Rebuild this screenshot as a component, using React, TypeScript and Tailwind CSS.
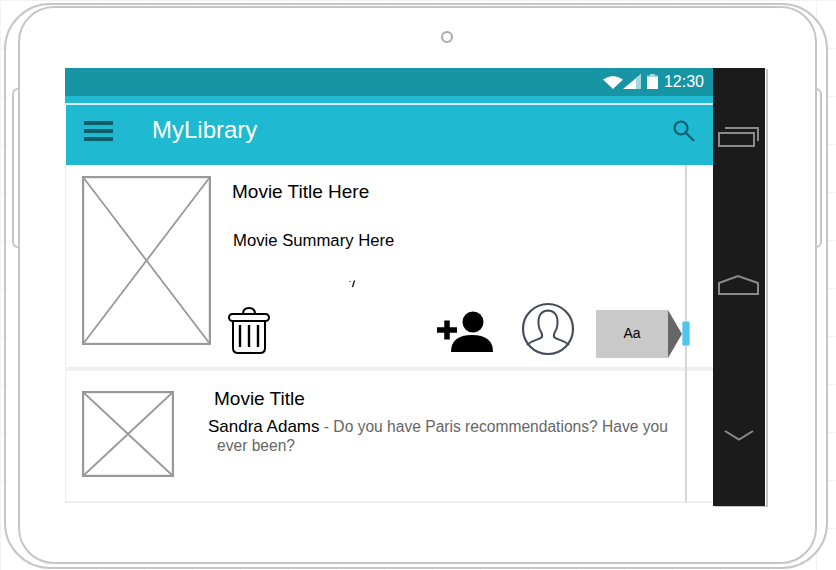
const font = "font-['Liberation_Sans',Arial,sans-serif]";

function Placeholder({ w, h }: { w: number; h: number }) {
  return (
    <svg width={w} height={h} viewBox={`0 0 ${w} ${h}`} className="block shrink-0">
      <rect x="1" y="1" width={w - 2} height={h - 2} fill="#fff" stroke="#999" strokeWidth="2.4" />
      <path d={`M1 1L${w - 1} ${h - 1}M${w - 1} 1L1 ${h - 1}`} stroke="#999" strokeWidth="1.8" />
    </svg>
  );
}

function StatusIcons() {
  return (
    <svg width="58" height="18" viewBox="0 0 58 18" className="block">
      <path d="M1 6.5Q11 -0.5 21 6.5L11 16Z" fill="#fff" />
      <path d="M21 16L39 16L39 1Z" fill="#fff" />
      <path d="M34 5.2L39 1L39 16L34 16Z" fill="#9fd9df" />
      <rect x="45" y="4" width="11" height="12" fill="#fff" />
      <path d="M45 4V2.5H48V1H53V2.5H56V4Z" fill="#9fd9df" />
    </svg>
  );
}

function Trash() {
  return (
    <svg width="44" height="50" viewBox="0 0 44 50" fill="none" stroke="#000" className="block">
      <rect x="2" y="9" width="40" height="7" rx="3.5" strokeWidth="2" />
      <path d="M16 9Q16 3 22 3Q28 3 28 9" strokeWidth="2" />
      <path d="M6 16V43Q6 48 11 48H33Q38 48 38 43V16" strokeWidth="2" />
      <path d="M13 20V42M22 20V42M31 20V42" strokeWidth="2.4" />
    </svg>
  );
}

function AddUser() {
  return (
    <svg width="58" height="42" viewBox="0 0 58 42" className="block">
      <circle cx="37" cy="11" r="10.5" fill="#000" />
      <path d="M15 41Q15 24 36 24Q57 24 57 41Z" fill="#000" />
      <path d="M1 19H21M11 9.5V28.5" stroke="#000" strokeWidth="5.5" fill="none" />
    </svg>
  );
}

function Avatar() {
  return (
    <svg width="54" height="54" viewBox="0 0 54 54" fill="none" stroke="#454d59" className="block">
      <circle cx="27" cy="27" r="25" strokeWidth="2.2" />
      <path
        d="M6 43C11 38 18 38 21 35C22 32 20 30 18.5 27C16.5 20 16.5 9 27 8.5C37.5 9 37.5 20 35.5 27C34 30 32 32 33 35C36 38 43 38 48 43"
        strokeWidth="2"
      />
    </svg>
  );
}

function NavBar() {
  return (
    <div className="w-[53px] bg-[#1b1b1b] h-[438px] border-r border-white shadow-[2px_1px_0_#c4c4c4] shrink-0 flex flex-col items-center">
      <svg width="44" height="24" viewBox="0 0 44 24" fill="none" stroke="#8a8a8a" strokeWidth="2" className="block mt-[58px]">
        <rect x="2" y="7" width="35" height="13" />
        <path d="M8 2H41V15" />
      </svg>
      <svg width="44" height="22" viewBox="0 0 44 22" fill="none" stroke="#8a8a8a" strokeWidth="2" className="block mt-[124px]">
        <path d="M2 20V9L21 2L41 9V20Z" />
      </svg>
      <svg width="32" height="14" viewBox="0 0 32 14" fill="none" stroke="#8a8a8a" strokeWidth="2" className="block mt-[133px]">
        <path d="M2 2L16 10.5L30 2" />
      </svg>
    </div>
  );
}

export default function App() {
  return (
    <div
      className={`${font} relative w-[836px] h-[570px] overflow-hidden bg-white bg-[linear-gradient(#f3f3f3_1px,transparent_1px),linear-gradient(90deg,#f3f3f3_1px,transparent_1px)] bg-[size:48px_48px] pl-[4px] pt-[3px]`}
    >
      <div className="relative w-[824px] h-[566px] bg-white rounded-[46px] border-2 border-[#c6c6c6] pl-[12px] pt-[1px]">
        {/* side buttons */}
        <div className="absolute left-[6px] top-[83px] w-[7px] h-[160px] border-l-2 border-t-2 border-b-2 border-[#c6c6c6] rounded-l-[6px]" />
        <div className="absolute right-[4px] top-[83px] w-[7px] h-[160px] border-r-2 border-t-2 border-b-2 border-[#c6c6c6] rounded-r-[6px]" />

        <div className="relative w-[799px] h-[558px] bg-white rounded-[36px] border-2 border-[#c6c6c6] pl-[45px] pt-[60px]">
          {/* camera */}
          <div className="absolute left-[421px] top-[23px] w-[12px] h-[12px] rounded-full border-2 border-[#aaa]" />

          <div className="flex">
            <div className="relative w-[648px] shrink-0 h-[435px]">
              <div className="h-[28px] bg-[#1795a5] flex items-center justify-end pr-[9px] gap-[4px]">
                <StatusIcons />
                <span className="text-[16px] text-white leading-none">12:30</span>
              </div>
              <div className="h-[7px] bg-[#1fb9d1]" />
              <div className="h-[2px] bg-[#d8eef2]" />
              <div className="h-[60px] bg-[#1fb9d1] flex items-center pl-[18px] pr-[17px] pb-[9px] ml-px">
                <div className="w-[29px] flex flex-col gap-[4px]">
                  <div className="h-[4px] bg-[#0d5f6d]" />
                  <div className="h-[4px] bg-[#0d5f6d]" />
                  <div className="h-[4px] bg-[#0d5f6d]" />
                </div>
                <span className="ml-[39px] -mt-[2px] text-[24px] text-white leading-none">MyLibrary</span>
                <svg width="24" height="24" viewBox="0 0 24 24" fill="none" stroke="#0d5f6d" strokeWidth="2.2" className="block ml-auto">
                  <circle cx="9" cy="9" r="6.5" />
                  <path d="M14 14L22 22" />
                </svg>
              </div>

              {/* scroll rule */}
              <div className="absolute left-[620px] top-[97px] w-[2px] h-[337px] bg-[#d6d6d6]" />

              {/* first card */}
              <div className="h-[202px] flex pl-[16px] pt-[11px] border-l border-[#eee]">
                <Placeholder w={129} h={169} />
                <div className="ml-[17px] flex-1 relative">
                  <div className="text-[19px] text-black leading-none mt-[6px] ml-[4px]">Movie Title Here</div>
                  <div className="text-[16.7px] text-black leading-none mt-[32px] ml-[5px]">Movie Summary Here</div>
                  <svg width="8" height="8" viewBox="0 0 8 8" className="block mt-[30px] ml-[120px]">
                    <path d="M6.5 0.5L4.5 7M1.5 1.5H2.5" stroke="#000" strokeWidth="1.2" fill="none" />
                  </svg>
                  <div className="flex items-start mt-[17px] -ml-px">
                    <Trash />
                    <div className="ml-[165px] mt-[6px]">
                      <AddUser />
                    </div>
                    <div className="ml-[27px] -mt-[3px]">
                      <Avatar />
                    </div>
                    <div className="ml-[21px] mt-[5px] flex items-center">
                      <div className="w-[72px] h-[48px] bg-[#c9c9c9] flex items-center justify-center text-[14px] text-black">Aa</div>
                      <div className="w-0 h-0 border-y-[24px] border-y-transparent border-l-[14px] border-l-[#666]" />
                      <div className="w-[8px] h-[25px] bg-[#4fc4ee] border border-[#8fdcf5] rounded-[2px]" />
                    </div>
                  </div>
                </div>
              </div>

              <div className="h-[4px] bg-[#f0f0f0]" />

              {/* second card */}
              <div className="h-[132px] flex pl-[16px] pt-[20px] border-l border-b-2 border-[#eee]">
                <Placeholder w={92} h={86} />
                <div className="ml-[34px] w-[470px]">
                  <div className="text-[19px] text-black leading-none ml-[6px] -mt-[2px]">Movie Title</div>
                  <div className="text-[15.6px] leading-[19px] text-[#666] mt-[9px]">
                    <span className="text-[17px] text-black">Sandra Adams</span> - Do you have Paris recommendations? Have you
                    <div className="ml-[9px]">ever been?</div>
                  </div>
                </div>
              </div>
            </div>
            <NavBar />
          </div>
        </div>
      </div>
    </div>
  );
}
